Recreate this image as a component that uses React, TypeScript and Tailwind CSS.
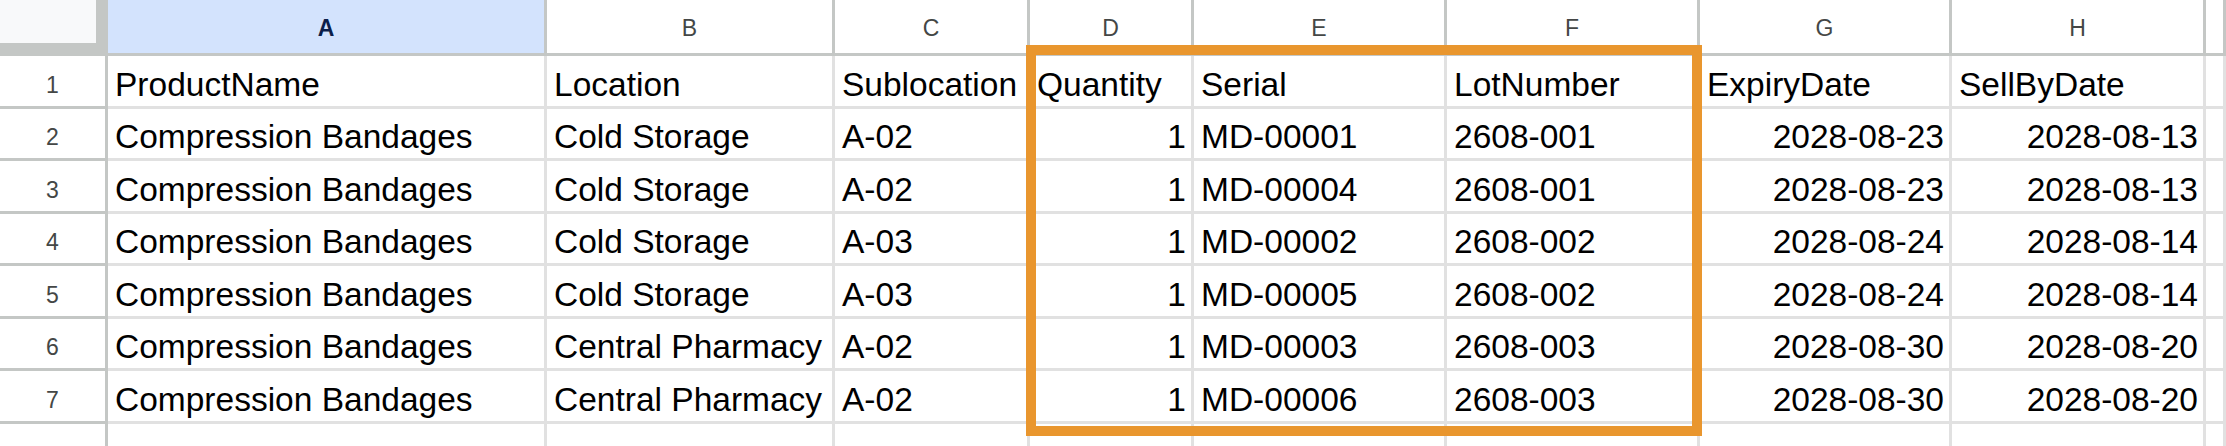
const columns = [
  { letter: 'A', width: '439px' },
  { letter: 'B', width: '288px' },
  { letter: 'C', width: '195px' },
  { letter: 'D', width: '164px' },
  { letter: 'E', width: '253px' },
  { letter: 'F', width: '253px' },
  { letter: 'G', width: '252px' },
  { letter: 'H', width: '254px' },
  { letter: '', width: '20px' },
];

// which columns hold numbers (right-aligned in data rows)
const numeric = [false, false, false, true, false, false, true, true, false];

const header = ['ProductName', 'Location', 'Sublocation', 'Quantity', 'Serial', 'LotNumber', 'ExpiryDate', 'SellByDate', ''];

const rows = [
  ['Compression Bandages', 'Cold Storage', 'A-02', '1', 'MD-00001', '2608-001', '2028-08-23', '2028-08-13', ''],
  ['Compression Bandages', 'Cold Storage', 'A-02', '1', 'MD-00004', '2608-001', '2028-08-23', '2028-08-13', ''],
  ['Compression Bandages', 'Cold Storage', 'A-03', '1', 'MD-00002', '2608-002', '2028-08-24', '2028-08-14', ''],
  ['Compression Bandages', 'Cold Storage', 'A-03', '1', 'MD-00005', '2608-002', '2028-08-24', '2028-08-14', ''],
  ['Compression Bandages', 'Central Pharmacy', 'A-02', '1', 'MD-00003', '2608-003', '2028-08-30', '2028-08-20', ''],
  ['Compression Bandages', 'Central Pharmacy', 'A-02', '1', 'MD-00006', '2608-003', '2028-08-30', '2028-08-20', ''],
];

function RowNumber({ n }: { n: number }) {
  return (
    <div className="flex items-center justify-center border-r-[3px] border-b-[3px] border-[#c4c7c5] bg-white pt-[8px] text-[23px] text-[#444746]">
      {n}
    </div>
  );
}

function Cell({ text, right }: { text: string; right?: boolean }) {
  return (
    <div
      className={`flex items-end whitespace-nowrap border-r-[3px] border-b-[3px] border-[#e1e1e1] bg-white pl-[7px] pr-[5px] pb-[5px] text-[33.5px] leading-none text-black ${
        right ? 'justify-end' : 'justify-start'
      }`}
    >
      {text}
    </div>
  );
}

export default function App() {
  return (
    <div
      className="relative h-[446px] w-[2226px] overflow-hidden bg-white"
      style={{ fontFamily: '"Liberation Sans", Arial, sans-serif' }}
    >
      <div className="grid grid-cols-[108px_439px_288px_195px_164px_253px_253px_252px_254px_1fr] grid-rows-[56px_53px_52px_53px_52px_53px_52px_53px_60px]">
        {/* corner */}
        <div className="bg-[#c4c7c5]">
          <div className="h-[43px] w-[96px] bg-[#f8f9fa]" />
        </div>
        {columns.map((c, i) => (
          <div
            key={i}
            className={`flex items-center justify-center border-r-[3px] border-b-[3px] border-[#c4c7c5] pt-[4px] text-[23px] ${
              c.letter === 'A' ? 'bg-[#d3e3fd] font-bold text-[#0b1f4a]' : 'bg-white text-[#444746]'
            }`}
          >
            {c.letter}
          </div>
        ))}

        <RowNumber n={1} />
        {header.map((h, i) => (
          <Cell key={i} text={h} />
        ))}

        {rows.map((r, ri) => (
          <div key={ri} className="contents">
            <RowNumber n={ri + 2} />
            {r.map((v, ci) => (
              <Cell key={ci} text={v} right={numeric[ci]} />
            ))}
          </div>
        ))}

        <RowNumber n={8} />
        {columns.map((_, i) => (
          <Cell key={i} text="" />
        ))}
      </div>

      {/* highlight box over columns D–F */}
      <div className="pointer-events-none absolute left-[1026px] top-[45px] h-[391px] w-[676px] border-[10px] border-[#e9962e]" />
    </div>
  );
}
